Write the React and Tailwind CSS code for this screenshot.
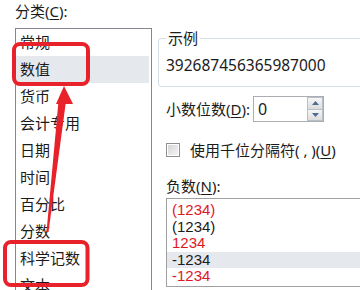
export default function App() {
  const cats = ["常规", "数值", "货币", "会计专用", "日期", "时间", "百分比", "分数", "科学记数", "文本", "特殊"];
  const negs = [
    { t: "(1234)", red: true },
    { t: "(1234)", red: false },
    { t: "1234", red: true },
    { t: "-1234", red: false, sel: true },
    { t: "-1234", red: true },
  ];
  return (
    <div className="relative w-[360px] h-[290px] overflow-hidden bg-white text-[#1b1b1b] [font-family:'Noto_Sans','Noto_Sans_CJK_SC',sans-serif]">
      <div className="flex h-full">
        {/* Left column */}
        <div className="w-[152px] shrink-0 pl-[15px] pt-[1px]">
          <div className="h-[20px] leading-[20px] text-[15px]">
            分类(<span className="underline underline-offset-2">C</span>):
          </div>
          <div className="mt-[7px] h-[300px] border-l border-t border-r border-[#828790]">
            {cats.map((c, i) => (
              <div
                key={c}
                className={`h-[27px] leading-[27px] pl-[4px] mr-[2px] text-[15px] ${i === 1 ? "bg-[#e5e8ed]" : ""}`}
              >
                {c}
              </div>
            ))}
          </div>
        </div>

        {/* Right column */}
        <div className="flex-1 pl-[6px] pt-[28px]">
          <fieldset className="w-[230px] border border-[#d5dfe5] rounded-[3px] px-[7px]">
            <legend className="px-[2px] h-[20px] leading-[20px] text-[15px]">示例</legend>
            <div className="pt-[7px] pb-[11px] h-[38px] leading-[20px] text-[15.5px] whitespace-nowrap">
              392687456365987000
            </div>
          </fieldset>

          <div className="mt-[9px] pl-[8px] flex items-center">
            <div className="w-[87px] text-[15px] leading-[20px] whitespace-nowrap">
              小数位数(<span className="underline underline-offset-2">D</span>):
            </div>
            <div className="flex h-[26px] w-[71px] border border-[#abadb3]">
              <div className="flex-1 pl-[4px] leading-[24px] text-[16px]">0</div>
              <div className="w-[16px] flex flex-col">
                <div className="flex-1 flex items-center justify-center border border-[#b7bfcb] bg-gradient-to-b from-[#f6f6f6] to-[#dcdcdc]">
                  <svg width="7" height="4" viewBox="0 0 7 4"><path d="M0 4 L3.5 0 L7 4 Z" fill="#4d6a93" /></svg>
                </div>
                <div className="flex-1 flex items-center justify-center border border-t-0 border-[#b7bfcb] bg-gradient-to-b from-[#f6f6f6] to-[#dcdcdc]">
                  <svg width="7" height="4" viewBox="0 0 7 4"><path d="M0 0 L3.5 4 L7 0 Z" fill="#4d6a93" /></svg>
                </div>
              </div>
            </div>
          </div>

          <div className="mt-[18px] pl-[8px] flex items-center h-[20px]">
            <div className="w-[14px] h-[14px] border border-[#8e8f8f] bg-white p-[1px]">
              <div className="w-full h-full bg-gradient-to-br from-[#d6d6d6] to-[#f4f4f4]" />
            </div>
            <div className="ml-[10px] text-[15px] leading-[20px] whitespace-nowrap">
              使用千位分隔符( , )(<span className="underline underline-offset-2">U</span>)
            </div>
          </div>

          <div className="mt-[16px] pl-[8px] h-[20px] leading-[20px] text-[15px]">
            负数(<span className="underline underline-offset-2">N</span>):
          </div>

          <div className="mt-[2px] ml-[8px] w-[220px] h-[89px] border border-[#a0a0a0] pt-[3px] [font-family:'Liberation_Sans',sans-serif]">
            {negs.map((n, i) => (
              <div
                key={i}
                className={`h-[16.5px] leading-[16.5px] pl-[5px] text-[15px] ${n.red ? "text-[#e0161f]" : "text-[#1b1b1b]"} ${n.sel ? "bg-[#e5e8ed]" : ""}`}
              >
                {n.t}
              </div>
            ))}
          </div>
        </div>
      </div>

      {/* Red annotations */}
      <svg className="absolute inset-0 pointer-events-none" width="360" height="290" viewBox="0 0 360 290">
        <rect x="14" y="44" width="74" height="40" rx="6" fill="none" stroke="#e8222a" strokeWidth="4" />
        <rect x="5" y="242" width="82.5" height="43" rx="6" fill="none" stroke="#e8222a" strokeWidth="4" />
        <polygon points="58.5,101 66,101 48.5,232 46.5,232" fill="#e8222a" />
        <polygon points="56,104 73,104 64,86" fill="#e8222a" />
      </svg>
    </div>
  );
}
